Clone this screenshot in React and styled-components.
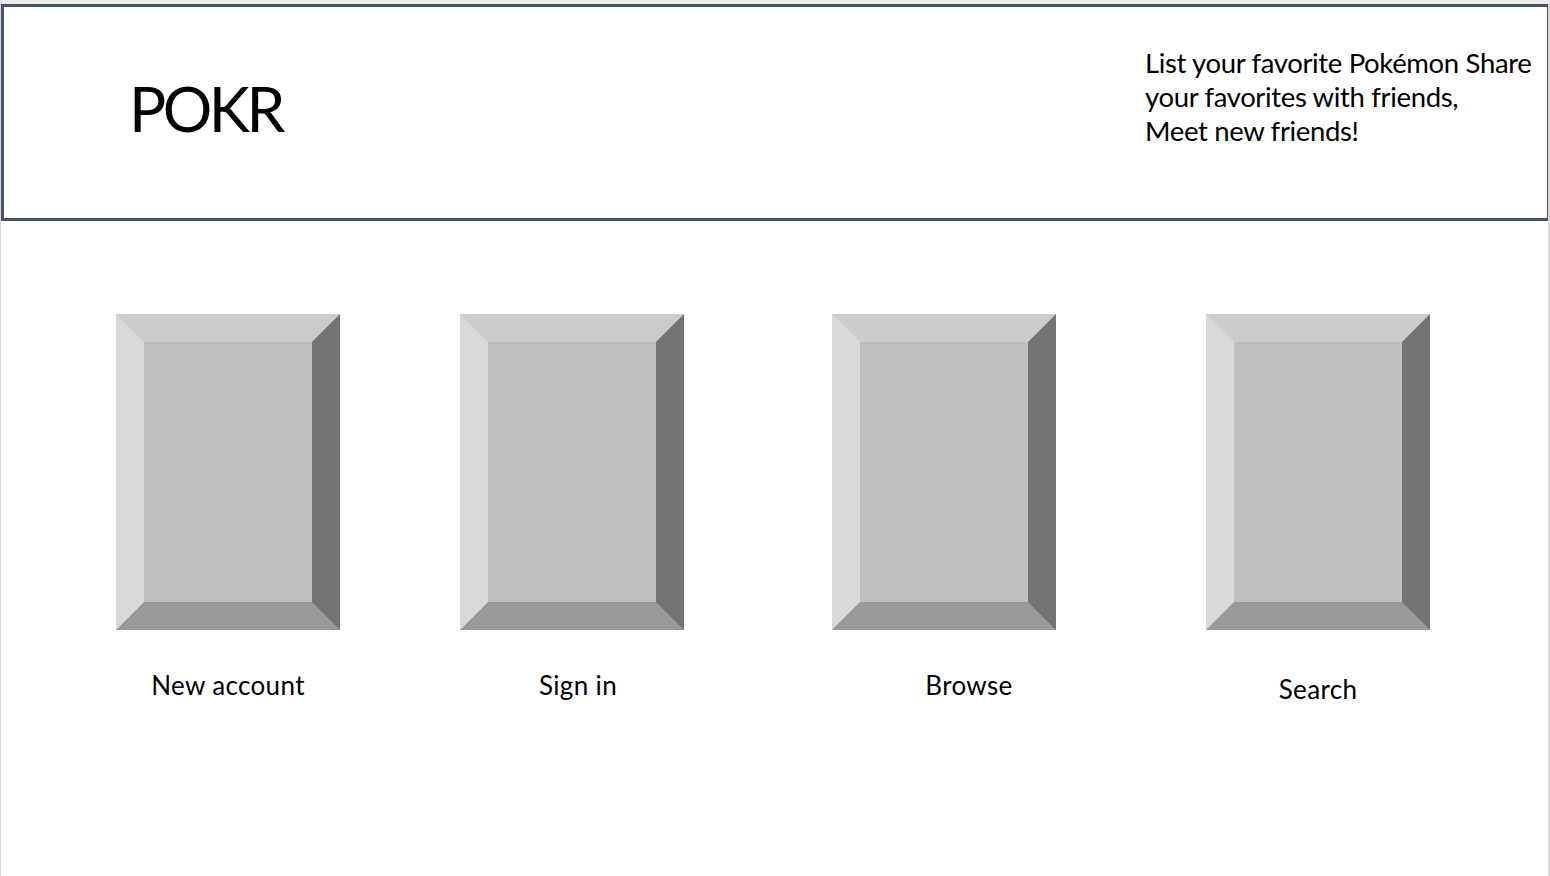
import React from "react";
import styled, { createGlobalStyle } from "styled-components";

const Global = createGlobalStyle`
  html, body { margin: 0; padding: 0; background: #ffffff; }
  body { font-family: Lato, "Open Sans", "Liberation Sans", sans-serif; color: #000; }
  * { box-sizing: border-box; }
`;

const Page = styled.div`
  width: 1550px;
  height: 876px;
  border-top: 4px solid #ebebeb;
  border-left: 1px solid #d9d9d9;
  border-right: 2px solid #d9d9d9;
  background: #ffffff;
  overflow: hidden;
`;

const Header = styled.header`
  height: 217px;
  margin-right: -2px;
  border: 3px solid #44546a;
  display: flex;
  justify-content: space-between;
  align-items: flex-start;
`;

const Title = styled.h1`
  margin: 0;
  padding: 63px 0 0 125px;
  font-weight: 400;
  font-size: 62px;
  line-height: 76px;
  letter-spacing: -3.5px;
`;

const Tagline = styled.p`
  margin: 0;
  width: 402px;
  padding: 39px 0 0 0;
  font-size: 27.5px;
  line-height: 34px;
  letter-spacing: -0.35px;
`;

const Tiles = styled.main`
  display: flex;
  padding: 93px 0 0 115px;
`;

const Tile = styled.div`
  width: 224px;
  margin-left: ${(p) => p.$offset}px;
  display: flex;
  flex-direction: column;
  align-items: center;
`;

const Bevel = styled.div`
  width: 224px;
  height: 316px;
  border-style: solid;
  border-width: 28px;
  border-color: #cccccc #737373 #999999 #d9d9d9;
  background: #bfbfbf;
`;

const Label = styled.span`
  margin-top: ${(p) => 38 + (p.$drop || 0)}px;
  transform: translateX(${(p) => p.$shift || 0}px);
  font-size: 26px;
  line-height: 34px;
  letter-spacing: 0.35px;
  white-space: nowrap;
`;

const items = [
  { label: "New account", offset: 0, shift: 0 },
  { label: "Sign in", offset: 120, shift: 6 },
  { label: "Browse", offset: 148, shift: 25 },
  { label: "Search", offset: 150, shift: 0, drop: 4 },
];

export default function App() {
  return (
    <>
      <Global />
      <Page>
        <Header>
          <Title>POKR</Title>
          <Tagline>
            List your favorite Pokémon Share
            <br />
            your favorites with friends,
            <br />
            Meet new friends!
          </Tagline>
        </Header>
        <Tiles>
          {items.map((it) => (
            <Tile key={it.label} $offset={it.offset}>
              <Bevel />
              <Label $shift={it.shift} $drop={it.drop}>
                {it.label}
              </Label>
            </Tile>
          ))}
        </Tiles>
      </Page>
    </>
  );
}
